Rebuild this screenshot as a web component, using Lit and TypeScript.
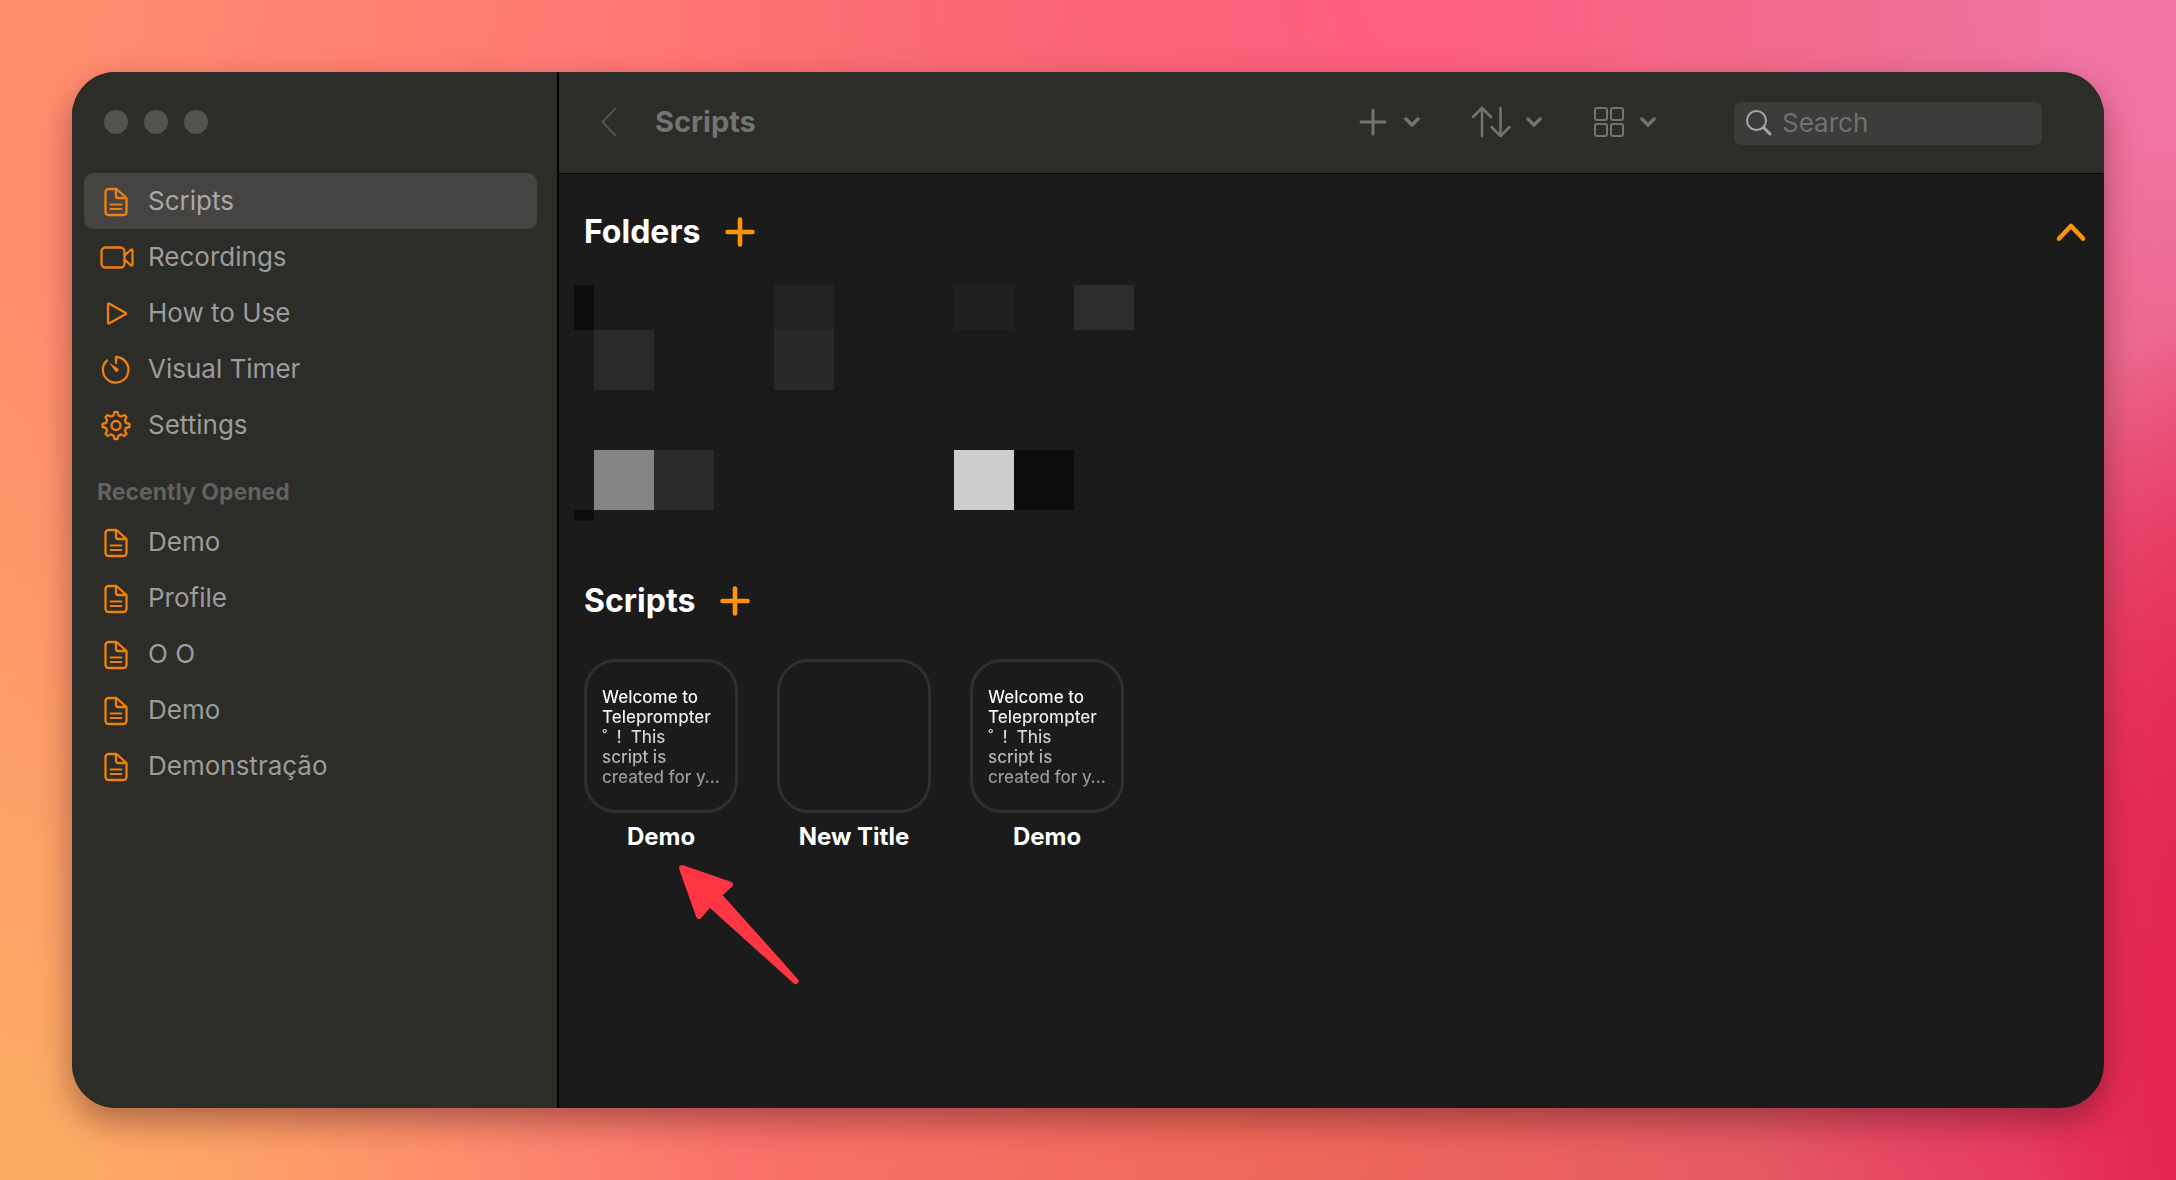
import { LitElement, html, svg, css } from "lit";
import { customElement, property } from "lit/decorators.js";
import { styleMap } from "lit/directives/style-map.js";

const glyphs: Record<string, unknown> = {
  doc: svg`<path d="M8.500 4h8L26.500 13v14a3 3 0 0 1-3 3h-15a3 3 0 0 1-3-3V7a3 3 0 0 1 3-3z"/><path d="M16 4.500V11a2 2 0 0 0 2 2h7.500"/><path d="M10.500 19.500h11M10.500 24h11" stroke-width="1.800"/>`,
  video: svg`<rect x="1.500" y="6.500" width="23" height="20" rx="4"/><path d="M24.500 14.500l6-5.500q2-1.500 2 .800v13.400q0 2.300-2 .800l-6-5.500"/>`,
  play: svg`<path d="M8 7.500v18q0 1.500 1.400.700l16-9q1-.700 0-1.400l-16-9Q8 6 8 7.500z"/>`,
  timer: svg`<path d="M16 10V4a12.800 12.800 0 1 1-9 3.400"/><path d="M9.300 9.700l8.200 5.600a1.900 1.900 0 1 1-2.600 2.600z" fill="currentColor" stroke="none"/>`,
  gear: svg`<path d="${gearPath()}"/><circle cx="16" cy="16.500" r="4.500"/>`,
};

/* Eight-toothed cog outline centred in a 32-unit box. */
function gearPath(): string {
  const at = (r: number, deg: number) => {
    const a = (deg * Math.PI) / 180;
    return `${(16 + r * Math.sin(a)).toFixed(2)} ${(16.5 - r * Math.cos(a)).toFixed(2)}`;
  };
  let d = `M${at(13.4, -7)}`;
  for (let i = 0; i < 8; i++) {
    const c = i * 45;
    d += `Q${at(13.8, c)} ${at(13.4, c + 7)}L${at(11.3, c + 11)}Q${at(9.6, c + 15)} ${at(10.4, c + 22.5)}`;
    d += `Q${at(9.6, c + 30)} ${at(11.3, c + 34)}L${at(13.4, c + 38)}`;
  }
  return d + "Z";
}

@customElement("side-item")
class SideItem extends LitElement {
  @property() icon = "doc";
  @property() label = "";
  @property({ type: Boolean }) active = false;

  static styles = css`
    :host { display: block; }
    .item {
      display: flex; align-items: center; gap: 16px;
      height: 56px; padding: 0 16px; border-radius: 9px;
      color: #9c9c9b; font-size: 26px; line-height: 32px; text-decoration: none;
    }
    .item.on { background: #454442; color: #a9a9a8; }
    .icon { flex: none; width: 32px; height: 32px; overflow: visible; color: #f07f0c; }
  `;

  render() {
    return html`<a class=${this.active ? "item on" : "item"} href="#">
      <svg class="icon" viewBox="0 0 32 32" fill="none" stroke="currentColor" stroke-width="2.300" stroke-linejoin="round" stroke-linecap="round" aria-hidden="true">${glyphs[this.icon]}</svg>
      <span>${this.label}</span>
    </a>`;
  }
}

@customElement("script-card")
class ScriptCard extends LitElement {
  @property() label = "";
  @property() preview = "";

  static styles = css`
    :host { display: block; width: 154px; }
    .card {
      display: block; width: 100%; padding: 0; border: 0; background: none;
      color: #fff; font: inherit; text-align: center; cursor: pointer;
    }
    .page {
      display: block; box-sizing: border-box; height: 154px; padding: 25px 12px 0 15px;
      border: 3px solid #303030; border-radius: 32px; text-align: left;
    }
    .text {
      display: block; font-size: 17px; line-height: 20px; font-weight: 500; white-space: pre;
      color: transparent; background: linear-gradient(#fff 20%, #8c8c8c); background-clip: text;
    }
    .name { display: block; margin-top: 9px; font-size: 24px; line-height: 30px; font-weight: 700; white-space: nowrap; }
  `;

  render() {
    return html`<button class="card">
      <span class="page"><span class="text">${this.preview}</span></span>
      <span class="name">${this.label}</span>
    </button>`;
  }
}

const menu = [
  { icon: "doc", label: "Scripts", active: true },
  { icon: "video", label: "Recordings" },
  { icon: "play", label: "How to Use" },
  { icon: "timer", label: "Visual Timer" },
  { icon: "gear", label: "Settings" },
];

const recent = ["Demo", "Profile", "O O", "Demo", "Demonstração"];

const welcome = "Welcome to\nTeleprompter\n˚  !  This\nscript is\ncreated for y…";

const scripts = [
  { label: "Demo", preview: welcome },
  { label: "New Title", preview: "" },
  { label: "Demo", preview: welcome },
];

/* Redacted folder tiles: column, row, shade. */
const tiles: [number, number, string][] = [
  [1, 1, "#0d0d0d"], [5, 1, "#242424"], [8, 1, "#202020"], [10, 1, "#2e2e2e"],
  [2, 2, "#2b2b2b"], [5, 2, "#292929"],
  [2, 4, "#848484"], [3, 4, "#2b2b2b"], [8, 4, "#cdcdcd"], [9, 4, "#0d0d0d"],
  [1, 5, "#0d0d0d"],
];

@customElement("app-root")
class AppRoot extends LitElement {
  static styles = css`
    :host {
      display: flex; box-sizing: border-box; min-height: 100vh; padding: 72px;
      font-family: Inter, "Liberation Sans", sans-serif;
      background:
        radial-gradient(ellipse 8% 62% at 101% 88%, #e4264f 20%, #e4264f00 100%),
        radial-gradient(ellipse 22% 56% at 102% 84%, #e8305c 15%, #e8305c00 100%),
        radial-gradient(ellipse 34% 72% at 100% 0%, #f074a2 15%, #f074a200 100%),
        radial-gradient(ellipse 36% 55% at 66% 0%, #fe5e80 8%, #fe5e8000 100%),
        radial-gradient(ellipse 34% 80% at 0% 100%, #fbac64 8%, #fbac6400 100%),
        linear-gradient(100deg, #ff8f6e 0%, #ff7674 28%, #f06a5a 60%, #e55a62 82%, #e8456a 100%);
    }
    .window {
      flex: 1; display: flex; overflow: hidden; border-radius: 44px; background: #1b1b1b;
      box-shadow: 0 14px 32px rgba(60, 10, 20, 0.4);
    }
    .sidebar { flex: none; width: 453px; padding: 0 20px 0 12px; background: #2c2c29; border-right: 2px solid #000; }
    .lights { display: flex; align-items: center; gap: 16px; height: 100px; padding: 0 0 1px 20px; }
    .light { width: 24px; height: 24px; padding: 0; border: 0; border-radius: 50%; background: #53534f; }
    .group { margin: 0; padding: 24px 0 7px 13px; font-size: 23px; line-height: 30px; font-weight: 700; color: #626261; }
    .main { flex: 1; min-width: 0; display: flex; flex-direction: column; }
    .toolbar {
      display: flex; align-items: center; height: 99px; padding: 0 62px 2px 36px;
      background: #2c2c29; border-bottom: 1px solid #000; color: #737372;
    }
    .toolbar svg, .head svg { display: block; flex: none; fill: none; stroke: currentColor; stroke-linecap: round; stroke-linejoin: round; }
    button { font: inherit; color: inherit; background: none; border: 0; padding: 0; cursor: pointer; }
    .title { flex: 1; margin: 0 0 0 32px; font-size: 29px; line-height: 36px; font-weight: 700; }
    .tools { display: flex; align-items: center; gap: 51px; margin-right: 78px; }
    .tool { display: flex; align-items: center; gap: 15px; }
    .search {
      display: flex; align-items: center; gap: 8px; box-sizing: border-box; width: 308px; height: 43px;
      margin-top: 3px; padding: 0 10px; border-radius: 7px; background: #3c3c3a; color: #a6a6a5;
    }
    .field { flex: 1; min-width: 0; padding: 0; border: 0; outline: 0; background: none; color: #ddd; font: inherit; font-size: 26px; line-height: 34px; }
    .field::placeholder { color: #717170; opacity: 1; }
    .content { flex: 1; padding: 36px 16px 40px 15px; }
    .head { display: flex; align-items: center; gap: 24px; height: 44px; padding-left: 10px; color: #ff9409; }
    .head h2 { margin: 0; font-size: 32px; line-height: 44px; font-weight: 700; color: #fff; }
    .fold { margin-left: auto; }
    .tiles {
      display: grid; grid-template-columns: 20px repeat(9, 60px); grid-template-rows: 45px repeat(3, 60px) 11px;
      margin: 31px 0 58px;
    }
    .cards { position: relative; display: flex; flex-wrap: wrap; gap: 39px; margin-top: 36px; padding-left: 10px; }
    .pointer { position: absolute; left: 86px; top: 190px; fill: #fe3644; stroke: #fe3644; stroke-width: 6px; stroke-linejoin: round; }
  `;

  private chevron() {
    return html`<svg width="16" height="12" viewBox="0 0 16 12" stroke-width="3.500" aria-hidden="true"><path d="M2 3l6 6 6-6"/></svg>`;
  }

  private heading(text: string, action: string) {
    return html`<h2>${text}</h2>
      <button aria-label=${action}>
        <svg width="32" height="32" viewBox="0 0 32 32" stroke-width="4.600" aria-hidden="true"><path d="M16 3.500v25M3.500 16h25"/></svg>
      </button>`;
  }

  render() {
    return html`
      <div class="window">
        <nav class="sidebar">
          <div class="lights">
            <button class="light" aria-label="Close"></button>
            <button class="light" aria-label="Minimize"></button>
            <button class="light" aria-label="Zoom"></button>
          </div>
          ${menu.map((m) => html`<side-item .icon=${m.icon} .label=${m.label} .active=${!!m.active}></side-item>`)}
          <h3 class="group">Recently Opened</h3>
          ${recent.map((label) => html`<side-item .label=${label}></side-item>`)}
        </nav>
        <main class="main">
          <header class="toolbar">
            <button aria-label="Back">
              <svg width="28" height="32" viewBox="0 0 28 32" stroke-width="2" aria-hidden="true"><path d="M20 3L7.500 16 20 29" stroke="#545452"/></svg>
            </button>
            <h1 class="title">Scripts</h1>
            <div class="tools">
              <button class="tool" aria-label="Add">
                <svg width="32" height="32" viewBox="0 0 32 32" stroke-width="3" aria-hidden="true"><path d="M16 4v24M4 16h24"/></svg>
                ${this.chevron()}
              </button>
              <button class="tool" aria-label="Sort">
                <svg width="40" height="32" viewBox="0 0 40 32" stroke-width="2.500" aria-hidden="true"><path d="M11 30V2M2 11l9-9 9 9M29.500 2v28M20.500 21l9 9 9-9"/></svg>
                ${this.chevron()}
              </button>
              <button class="tool" aria-label="View">
                <svg width="32" height="32" viewBox="0 0 32 32" stroke-width="2" aria-hidden="true"><rect x="2" y="2" width="12" height="12" rx="2"/><rect x="18" y="2" width="12" height="12" rx="2"/><rect x="2" y="18" width="12" height="12" rx="2"/><rect x="18" y="18" width="12" height="12" rx="2"/></svg>
                ${this.chevron()}
              </button>
            </div>
            <label class="search">
              <svg width="30" height="30" viewBox="0 0 30 30" stroke-width="2" aria-hidden="true"><circle cx="12.500" cy="12.500" r="9.500"/><path d="M19.500 19.500l6.500 6.500" stroke-width="3"/></svg>
              <input class="field" type="text" placeholder="Search" aria-label="Search" />
            </label>
          </header>
          <section class="content">
            <div class="head">
              ${this.heading("Folders", "Add folder")}
              <button class="fold" aria-label="Collapse folders">
                <svg width="34" height="32" viewBox="0 0 34 32" stroke-width="4.600" aria-hidden="true"><path d="M5 22.500L17 10l12 12.500"/></svg>
              </button>
            </div>
            <div class="tiles">
              ${tiles.map(([c, r, shade]) => html`<div style=${styleMap({ gridColumn: String(c), gridRow: String(r), background: shade })}></div>`)}
            </div>
            <div class="head">${this.heading("Scripts", "Add script")}</div>
            <div class="cards">
              ${scripts.map((s) => html`<script-card .label=${s.label} .preview=${s.preview}></script-card>`)}
              <svg class="pointer" width="160" height="150" viewBox="0 0 160 150" aria-hidden="true">
                <path d="M22 19L70 35.500 58.500 46 135.500 132 49.500 54.500 39 67z"/>
              </svg>
            </div>
          </section>
        </main>
      </div>
    `;
  }
}
